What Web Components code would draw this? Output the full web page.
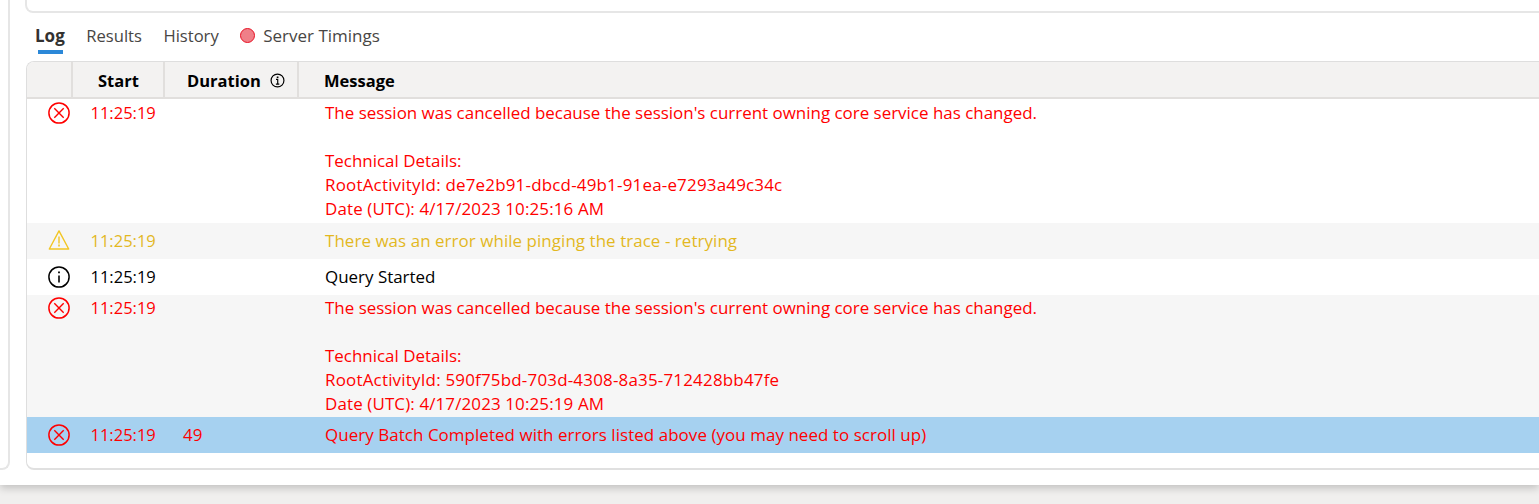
<!DOCTYPE html>
<html>
<head>
<meta charset="utf-8">
<title>Query log</title>
<style>
  html, body { margin: 0; height: 504px; overflow: hidden; background: #f0efee; }
  body { font-family: "Open Sans", "Noto Sans", sans-serif; }
  .id { letter-spacing: .2px; }
  .date { letter-spacing: .13px; }
  .wide { letter-spacing: .06px; }
</style>
</head>
<body>
<log-page>
  <log-tabs></log-tabs>
  <log-table>
    <log-row kind="error" time="11:25:19" pad="2">The session was cancelled because the session's current owning core service has changed.<br><br>Technical Details:<br><span class="id">RootActivityId: de7e2b91-dbcd-49b1-91ea-e7293a49c34c</span><br><span class="date">Date (UTC): 4/17/2023 10:25:16 AM</span></log-row>
    <log-row kind="warn" time="11:25:19" shade><span class="wide">There was an error while pinging the trace - retrying</span></log-row>
    <log-row kind="info" time="11:25:19">Query Started</log-row>
    <log-row kind="error" time="11:25:19" pad="1" shade>The session was cancelled because the session's current owning core service has changed.<br><br>Technical Details:<br><span class="id">RootActivityId: 590f75bd-703d-4308-8a35-712428bb47fe</span><br><span class="date">Date (UTC): 4/17/2023 10:25:19 AM</span></log-row>
    <log-row kind="error" time="11:25:19" duration="49" selected><span class="wide">Query Batch Completed with errors listed above (you may need to scroll up)</span></log-row>
  </log-table>
</log-page>

<script>
class LogPage extends HTMLElement {
  constructor() {
    super();
    this.attachShadow({ mode: 'open' });
    this.shadowRoot.innerHTML = `
      <style>
        :host {
          display: block;
          width: 1539px;
          height: 485px;
          background: #fff;
          box-shadow: 0 3px 8px rgba(0,0,0,.2);
          overflow: hidden;
        }
        .wrap { display: grid; grid-template-columns: 10px 1fr; column-gap: 15px; height: 470px; }
        .side {
          border: 2px solid #e6e6e6;
          border-left: 0;
          border-top: 0;
          border-bottom-right-radius: 8px;
          box-sizing: border-box;
        }
        .main { display: flex; flex-direction: column; min-width: 0; margin-right: -20px; }
        .top {
          height: 13px;
          box-sizing: border-box;
          border: 2px solid #e6e6e6;
          border-top: 0;
          border-bottom-left-radius: 8px;
        }
      </style>
      <div class="wrap">
        <div class="side"></div>
        <div class="main">
          <div class="top"></div>
          <slot></slot>
        </div>
      </div>
    `;
  }
}
customElements.define('log-page', LogPage);

class LogTabs extends HTMLElement {
  constructor() {
    super();
    this.attachShadow({ mode: 'open' });
    this.shadowRoot.innerHTML = `
      <style>
        :host {
          display: flex;
          align-items: flex-start;
          height: 48px;
          padding-left: 10px;
          font-size: 16.6px;
          color: #484644;
        }
        .tab { margin-top: 11px; line-height: 24px; margin-right: 21.5px; position: relative; }
        .on { font-size: 17px; font-weight: 700; color: #323130; }
        .on::after {
          content: '';
          position: absolute;
          left: 3px; right: 2px; top: 26px;
          height: 4px;
          background: #2b88d8;
        }
        .timing { display: flex; align-items: center; gap: 8px; margin-right: 0; font-size: 17px; }
        .dot {
          width: 13px; height: 13px;
          border-radius: 50%;
          background: #ef7f88;
          border: 1px solid #e81123;
          margin-top: -2px;
        }
      </style>
      <div class="tab on">Log</div>
      <div class="tab">Results</div>
      <div class="tab">History</div>
      <div class="tab timing"><span class="dot"></span>Server Timings</div>
    `;
  }
}
customElements.define('log-tabs', LogTabs);

class LogTable extends HTMLElement {
  constructor() {
    super();
    this.attachShadow({ mode: 'open' });
    this.shadowRoot.innerHTML = `
      <style>
        :host {
          display: block;
          flex: 1;
          margin-left: 1px;
          border: 2px solid #e6e6e6;
          border-width: 1px 0 2px 1px;
          border-color: #dedede #e6e6e6 #e0e0e0 #dedede;
          border-radius: 8px 0 0 8px;
          box-sizing: border-box;
          background: #fff;
          overflow: hidden;
        }
        .head {
          display: grid;
          grid-template-columns: 46px 92px 134px 1fr;
          height: 35px;
          background: #f3f2f1;
          border-bottom: 2px solid #e1dfdd;
          font-size: 16.5px;
          font-weight: 700;
          color: #000;
          line-height: 37px;
        }
        .head > div { border-right: 2px solid #e1dfdd; box-sizing: border-box; min-width: 0; white-space: nowrap; }
        .head > div:last-child { border-right: 0; padding-left: 25px; }
        .start { padding-left: 25px; }
        .dur { padding-left: 22px; display: flex; align-items: center; gap: 9px; }
        .dur svg { display: block; }
      </style>
      <div class="head">
        <div></div>
        <div class="start">Start</div>
        <div class="dur">Duration
          <svg width="15" height="15" viewBox="0 0 14 14" fill="none" stroke="#000">
            <circle cx="7" cy="7" r="6" stroke-width="1.1"/>
            <path d="M5.6 5.9H7.2V10.4M5.5 10.4H8.7" stroke-width="1.1"/>
            <path d="M6.3 3.3H7.9V4.6H6.3Z" fill="#000" stroke="none"/>
          </svg>
        </div>
        <div>Message</div>
      </div>
      <slot></slot>
    `;
  }
}
customElements.define('log-table', LogTable);

const ICONS = {
  error: `<circle cx="11" cy="11" r="10.1" stroke-width="1.5"/><path d="M6.3 6.3 15.7 15.7M15.7 6.3 6.3 15.7" stroke-width="1.4"/>`,
  warn: `<path d="M11 .9 20.7 19H1.3Z" stroke-width="1.4" stroke-linejoin="round"/><path d="M11 6.6V13.4" stroke-width="1.4"/><path d="M11 14.6V16.4" stroke-width="1.6"/>`,
  info: `<circle cx="11" cy="11" r="10.1" stroke-width="1.5"/><path d="M11 9.6V16.6" stroke-width="1.6"/><path d="M11 5.4V7.2" stroke-width="1.8"/>`
};

class LogRow extends HTMLElement {
  constructor() {
    super();
    this.attachShadow({ mode: 'open' });
    const kind = this.getAttribute('kind') || 'info';
    const pad = this.getAttribute('pad') || '6';
    this.shadowRoot.innerHTML = `
      <style>
        :host {
          display: grid;
          grid-template-columns: 47px 92px 134px 1fr;
          padding: ${pad}px 0;
          font-size: 16.94px;
          line-height: 24px;
          color: var(--c);
          white-space: nowrap;
        }
        :host([kind="error"]) { --c: #ff0000; }
        :host([kind="warn"]) { --c: #e3b81f; }
        :host([kind="info"]) { --c: #000; }
        :host([shade]) { background: #f6f6f6; }
        :host([selected]) { background: #a6d1f0; }
        .icon { display: flex; justify-content: flex-end; padding-right: 4px; height: 24px; align-items: center; }
        svg { display: block; overflow: visible; }
        .time { padding-left: 16.5px; font-size: 16.5px; }
        .dur { padding-left: 17px; }
        .msg { padding-left: 25px; }
      </style>
      <div class="icon">
        <svg width="22" height="22" viewBox="0 0 22 22" fill="none" stroke="${kind === 'warn' ? '#f2c624' : 'currentColor'}">${ICONS[kind]}</svg>
      </div>
      <div class="time">${this.getAttribute('time') || ''}</div>
      <div class="dur">${this.getAttribute('duration') || ''}</div>
      <div class="msg"><slot></slot></div>
    `;
  }
}
customElements.define('log-row', LogRow);
</script>
</body>
</html>
